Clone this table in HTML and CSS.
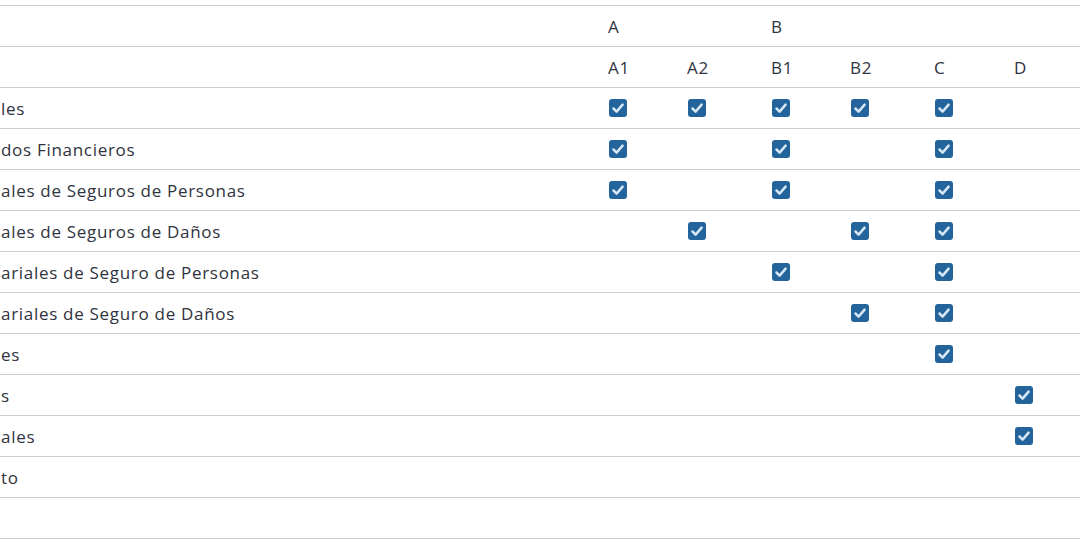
FILE: index.html
```html
<!DOCTYPE html>
<html lang="es">
<head>
<meta charset="utf-8">
<title>Tabla</title>
<link rel="stylesheet" href="styles.css">
</head>
<body>
<div class="frame">
<table class="grid">
  <colgroup>
    <col class="c-label"><col class="c-a1"><col class="c-a2"><col class="c-b1"><col class="c-b2"><col class="c-c"><col class="c-d">
  </colgroup>
  <thead>
    <tr><th></th><th colspan="2">A</th><th colspan="2">B</th><th></th><th></th></tr>
    <tr><th></th><th>A1</th><th>A2</th><th>B1</th><th>B2</th><th>C</th><th>D</th></tr>
  </thead>
  <tbody>
    <tr><td class="lbl">les</td><td><i class="ck"></i></td><td><i class="ck"></i></td><td><i class="ck"></i></td><td><i class="ck"></i></td><td><i class="ck"></i></td><td></td></tr>
    <tr><td class="lbl">dos Financieros</td><td><i class="ck"></i></td><td></td><td><i class="ck"></i></td><td></td><td><i class="ck"></i></td><td></td></tr>
    <tr><td class="lbl">ales de Seguros de Personas</td><td><i class="ck"></i></td><td></td><td><i class="ck"></i></td><td></td><td><i class="ck"></i></td><td></td></tr>
    <tr><td class="lbl">ales de Seguros de Daños</td><td></td><td><i class="ck"></i></td><td></td><td><i class="ck"></i></td><td><i class="ck"></i></td><td></td></tr>
    <tr><td class="lbl">ariales de Seguro de Personas</td><td></td><td></td><td><i class="ck"></i></td><td></td><td><i class="ck"></i></td><td></td></tr>
    <tr><td class="lbl">ariales de Seguro de Daños</td><td></td><td></td><td></td><td><i class="ck"></i></td><td><i class="ck"></i></td><td></td></tr>
    <tr><td class="lbl">es</td><td></td><td></td><td></td><td></td><td><i class="ck"></i></td><td></td></tr>
    <tr><td class="lbl">s</td><td></td><td></td><td></td><td></td><td></td><td><i class="ck"></i></td></tr>
    <tr><td class="lbl">ales</td><td></td><td></td><td></td><td></td><td></td><td><i class="ck"></i></td></tr>
    <tr><td class="lbl">to</td><td></td><td></td><td></td><td></td><td></td><td></td></tr>
    <tr><td class="lbl"></td><td></td><td></td><td></td><td></td><td></td><td></td></tr>
  </tbody>
</table>
</div>
</body>
</html>
```
FILE: styles.css
```css
html, body {
  margin: 0;
  padding: 0;
  background: #ffffff;
}
.frame {
  padding-top: 5px;
  width: 1080px;
  overflow: hidden;
}
.grid {
  width: 1080px;
  table-layout: fixed;
  border-collapse: collapse;
  font-family: "Open Sans", "Liberation Sans", sans-serif;
  font-size: 17px;
  letter-spacing: 0.7px;
  color: #2f3340;
}
.c-label { width: 608px; }
.c-a1 { width: 79px; }
.c-a2 { width: 84px; }
.c-b1 { width: 79px; }
.c-b2 { width: 84px; }
.c-c { width: 80px; }
.c-d { width: 66px; }
.grid th, .grid td {
  height: 40px;
  padding: 0;
  border-top: 1px solid #cfcfcf;
  border-bottom: 1px solid #cfcfcf;
  text-align: left;
  font-weight: 400;
  vertical-align: middle;
  white-space: nowrap;
  overflow: hidden;
}
.grid td.lbl {
  padding-left: 1px;
}
.ck {
  display: block;
  width: 18px;
  height: 18px;
  margin-left: 1px;
  border-radius: 3px;
  background-color: #22649b;
  background-image: url("data:image/svg+xml;utf8,<svg xmlns='http://www.w3.org/2000/svg' width='18' height='18' viewBox='0 0 18 18'><path d='M4.5 9.5 L7.6 12.6 L13.6 5.6' fill='none' stroke='%23d7e7f6' stroke-width='2.5' stroke-linecap='round' stroke-linejoin='round'/></svg>");
  background-repeat: no-repeat;
}
```
